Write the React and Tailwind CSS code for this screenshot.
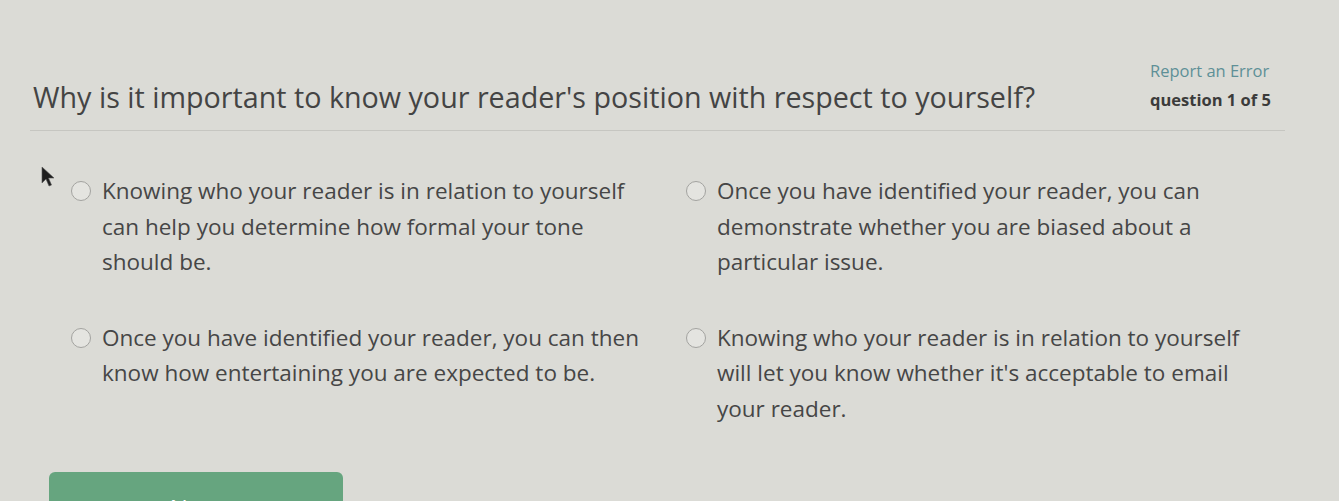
import React from 'react';

const options = [
    "Knowing who your reader is in relation to yourself can help you determine how formal your tone should be.",
    "Once you have identified your reader, you can demonstrate whether you are biased about a particular issue.",
    "Once you have identified your reader, you can then know how entertaining you are expected to be.",
    "Knowing who your reader is in relation to yourself will let you know whether it's acceptable to email your reader.",
];

const Radio = () => (
    <span className="mt-[8px] w-[20px] h-[20px] shrink-0 rounded-full border-[1.5px] border-[#a3a3a0] bg-[#e4e4e0]" />
);

const Option = ({ text }) => (
    <label className="flex gap-[11px] items-start cursor-pointer">
        <Radio />
        <span className="w-[548px] text-[22.5px] leading-[35.5px] text-[#464646]">{text}</span>
    </label>
);

const App = () => {
    return (
        <div
            className="relative w-[1339px] h-[501px] overflow-hidden bg-[#dbdbd6]"
            style={{ fontFamily: '"Open Sans", "Liberation Sans", sans-serif' }}
        >
            {/* header */}
            <div className="flex items-start justify-between pl-[33px] pr-[64px] pt-[60px]">
                <h1 className="mt-[15px] text-[28.7px] leading-[44px] text-[#444]">
                    Why is it important to know your reader's position with respect to yourself?
                </h1>
                <div className="flex flex-col w-[125px]">
                    <a className="text-[16.5px] leading-[22px] text-[#5e9097]">Report an Error</a>
                    <span className="mt-[8px] text-[16.5px] leading-[20px] font-bold text-[#3b3b3b]">question 1 of 5</span>
                </div>
            </div>
            <div className="ml-[30px] mt-[11px] w-[1255px] border-t border-[#c6c6c1]" />

            {/* answers */}
            <div className="grid grid-cols-[615px_1fr] gap-y-[40px] pl-[71px] pt-[42px]">
                {options.map((o, i) => (
                    <Option key={i} text={o} />
                ))}
            </div>

            <button className="mt-[46px] ml-[49px] w-[294px] h-[60px] rounded-[6px] bg-[#66a57f] text-white text-[24px] pt-[12px]">
                Next
            </button>

            {/* mouse pointer */}
            <svg className="absolute left-[40px] top-[166px]" width="16" height="22" viewBox="0 0 16 22">
                <path d="M2 1 L2 17 L6 13 L9 20 L11.5 19 L8.5 12 L14 12 Z" fill="#1e1e1e" stroke="#555" strokeWidth="0.6" />
            </svg>
        </div>
    );
};

export default App;
